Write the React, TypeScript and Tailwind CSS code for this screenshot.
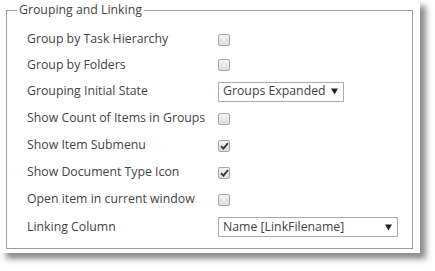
import React from "react";

type Row =
  | { label: string; kind: "check"; checked: boolean; h: string }
  | { label: string; kind: "select"; value: string; w: string; h: string };

const rows: Row[] = [
  { label: "Group by Task Hierarchy", kind: "check", checked: false, h: "h-[25px]" },
  { label: "Group by Folders", kind: "check", checked: false, h: "h-[26px]" },
  { label: "Grouping Initial State", kind: "select", value: "Groups Expanded", w: "w-[126px]", h: "h-[27px]" },
  { label: "Show Count of Items in Groups", kind: "check", checked: false, h: "h-[27px]" },
  { label: "Show Item Submenu", kind: "check", checked: true, h: "h-[27px]" },
  { label: "Show Document Type Icon", kind: "check", checked: true, h: "h-[27px]" },
  { label: "Open item in current window", kind: "check", checked: false, h: "h-[27px]" },
  { label: "Linking Column", kind: "select", value: "Name [LinkFilename]", w: "w-[180px]", h: "h-[28px]" },
];

function Checkbox({ checked }: { checked: boolean }) {
  return (
    <div className="flex h-[12px] w-[12px] items-center justify-center rounded-[2px] border border-[#a6a6a6] bg-gradient-to-b from-[#f4f4f4] to-[#dcdcdc]">
      {checked && (
        <svg width="9" height="8" viewBox="0 0 9 8">
          <path d="M1 4.2 L3.4 6.6 L8 1.2" fill="none" stroke="#333" strokeWidth="1.8" />
        </svg>
      )}
    </div>
  );
}

function Select({ value, w }: { value: string; w: string }) {
  return (
    <div className={`flex h-[20px] ${w} items-center justify-between whitespace-nowrap border border-[#ababab] bg-white pl-[4px] pr-[5px] text-[12.3px] text-[#444]`}>
      <span>{value}</span>
      <svg width="7" height="7" viewBox="0 0 7 7">
        <path d="M0 0.5 H7 L3.5 6.5 Z" fill="#222" />
      </svg>
    </div>
  );
}

export default function App() {
  return (
    <div className="h-[271px] w-[435px] bg-white font-['Open_Sans',sans-serif]">
      <div className="h-[253px] w-[420px] bg-white pt-[1px] pl-[6px] shadow-[6px_6px_6px_rgba(0,0,0,0.45)]">
        <fieldset className="h-[248px] w-[407px] border border-[#9c9c9c] pl-[20px] pt-[8px]">
          <legend className="-ml-[10px] px-[2px] text-[12.3px] leading-[18px] text-[#444]">Grouping and Linking</legend>
          {rows.map((r) => (
            <div key={r.label} className={`flex ${r.h} items-center`}>
              <div className="w-[191px] whitespace-nowrap text-[12.3px] text-[#444]">{r.label}</div>
              {r.kind === "check" ? <Checkbox checked={r.checked} /> : <Select value={r.value} w={r.w} />}
            </div>
          ))}
        </fieldset>
      </div>
    </div>
  );
}
